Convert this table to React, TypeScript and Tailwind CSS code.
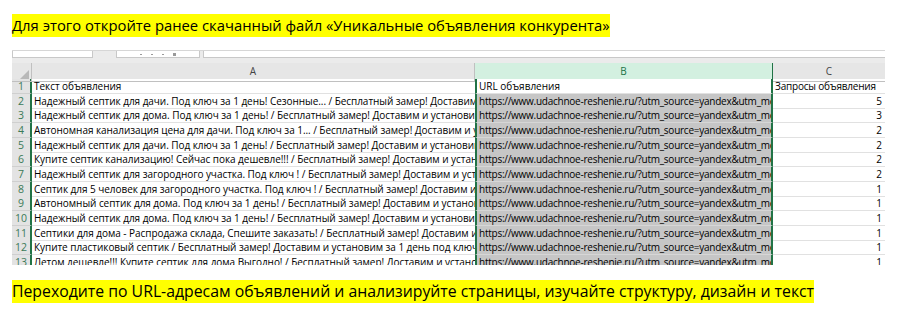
import React from "react";

const rowsA = [
  "Текст объявления",
  "Надежный септик для дачи. Под ключ за 1 день! Сезонные... / Бесплатный замер! Доставим и установим за 1 день",
  "Надежный септик для дома. Под ключ за 1 день! / Бесплатный замер! Доставим и установим за 1 день",
  "Автономная канализация цена для дачи. Под ключ за 1... / Бесплатный замер! Доставим и установим",
  "Надежный септик для дачи. Под ключ за 1 день! / Бесплатный замер! Доставим и установим за 1 день",
  "Купите септик канализацию! Сейчас пока дешевле!!! / Бесплатный замер! Доставим и установим",
  "Надежный септик для загородного участка. Под ключ ! / Бесплатный замер! Доставим и установим",
  "Септик для 5 человек для загородного участка. Под ключ ! / Бесплатный замер! Доставим и установим",
  "Автономный септик для дома. Под ключ за 1 день! / Бесплатный замер! Доставим и установим за 1 день",
  "Надежный септик для дома. Под ключ за 1 день! / Бесплатный замер! Доставим и установим за 1 день",
  "Септики для дома - Распродажа склада, Спешите заказать! / Бесплатный замер! Доставим и установим",
  "Купите пластиковый септик / Бесплатный замер! Доставим и установим за 1 день под ключ! / Купить",
  "Летом дешевле!!! Купите септик для дома Выгодно! / Бесплатный замер! Доставим и установим",
];
const rowsC = ["Запросы объявления", "5", "3", "2", "2", "2", "2", "1", "1", "1", "1", "1", "1"];
const URL = "https://www.udachnoe-reshenie.ru/?utm_source=yandex&utm_medium=cpc&utm_campaign=septik";

export default function App() {
  return (
    <div className="w-[897px] h-[324px] bg-white overflow-hidden font-['Open_Sans',sans-serif] text-black">
      <div className="pt-[13px] pl-[12px] h-[50px]">
        <span className="bg-[#ffff00] text-[14.8px] leading-[23px] inline-block whitespace-nowrap">
          Для этого откройте ранее скачанный файл «Уникальные объявления конкурента»
        </span>
      </div>

      <div className="ml-[12px] w-[873px] h-[215px] overflow-hidden">
        {/* formula bar remnant */}
        <div className="h-[13px] bg-[#ebebeb] border-t border-[#d6d6d6] flex items-start">
          <div className="w-[81px] h-[7px] bg-white border-x border-b border-[#c8c8c8]" />
          <div className="ml-[23px] w-[84px] h-[7px] bg-white border-x border-b border-[#c8c8c8] flex items-center justify-center gap-[9px]">
            <span className="w-[2px] h-[1px] bg-[#999]" />
            <span className="w-[2px] h-[1px] bg-[#999]" />
            <span className="w-[2px] h-[1px] bg-[#999]" />
            <span className="w-[3px] h-[3px] bg-[#999]" />
          </div>
          <div className="ml-[3px] flex-1 h-[7px] bg-white border-l border-b border-[#c8c8c8]" />
        </div>
        {/* column headers */}
        <div className="grid grid-cols-[20px_443px_298px_112px] h-[16px] bg-[#e6e6e6] text-[10px] leading-[17px] text-[#444]">
          <div className="relative border-r border-b border-[#c0c0c0]">
            <div className="absolute right-[2px] bottom-[2px] w-0 h-0 border-l-[9px] border-l-transparent border-b-[9px] border-b-[#b8b8b8]" />
          </div>
          <div className="text-center border-r border-b border-[#c0c0c0]">A</div>
          <div className="text-center bg-[#d3f0e0] text-[#217346] border-b-2 border-[#217346] border-r border-r-[#217346]">B</div>
          <div className="text-center border-b border-[#c0c0c0]">C</div>
        </div>
        {rowsA.map((a, i) => (
          <div
            key={i}
            className="grid grid-cols-[20px_443px_298px_112px] h-[14.67px] text-[10px] leading-[14px]"
          >
            <div className="bg-[#e3e3e3] text-[#3b7a57] text-center border-r-2 border-r-[#217346] border-b border-b-[#cfcfcf] text-[10.5px]">
              {i + 1}
            </div>
            <div className="pl-[2px] whitespace-nowrap overflow-hidden border-b border-[#e1e1e1] tracking-[-0.05px]">{a}</div>
            <div
              className={
                "pl-[2px] whitespace-nowrap overflow-hidden border-x-2 border-x-[#217346] border-b " +
                (i === 0 ? "bg-white border-b-[#e1e1e1]" : "bg-[#c6c6c6] border-b-[#d6d6d6] tracking-[-0.25px]")
              }
            >
              {i === 0 ? "URL объявления" : URL}
            </div>
            <div
              className={
                "whitespace-nowrap overflow-hidden border-b border-[#e1e1e1] " +
                (i === 0 ? "pl-[2px] tracking-[-0.2px]" : "text-right pr-[3px]")
              }
            >
              {rowsC[i]}
            </div>
          </div>
        ))}
      </div>

      <div className="pt-[14px] pl-[12px]">
        <span className="bg-[#ffff00] text-[15.8px] leading-[23px] inline-block whitespace-nowrap">
          Переходите по URL-адресам объявлений и анализируйте страницы, изучайте структуру, дизайн и текст
        </span>
      </div>
    </div>
  );
}
